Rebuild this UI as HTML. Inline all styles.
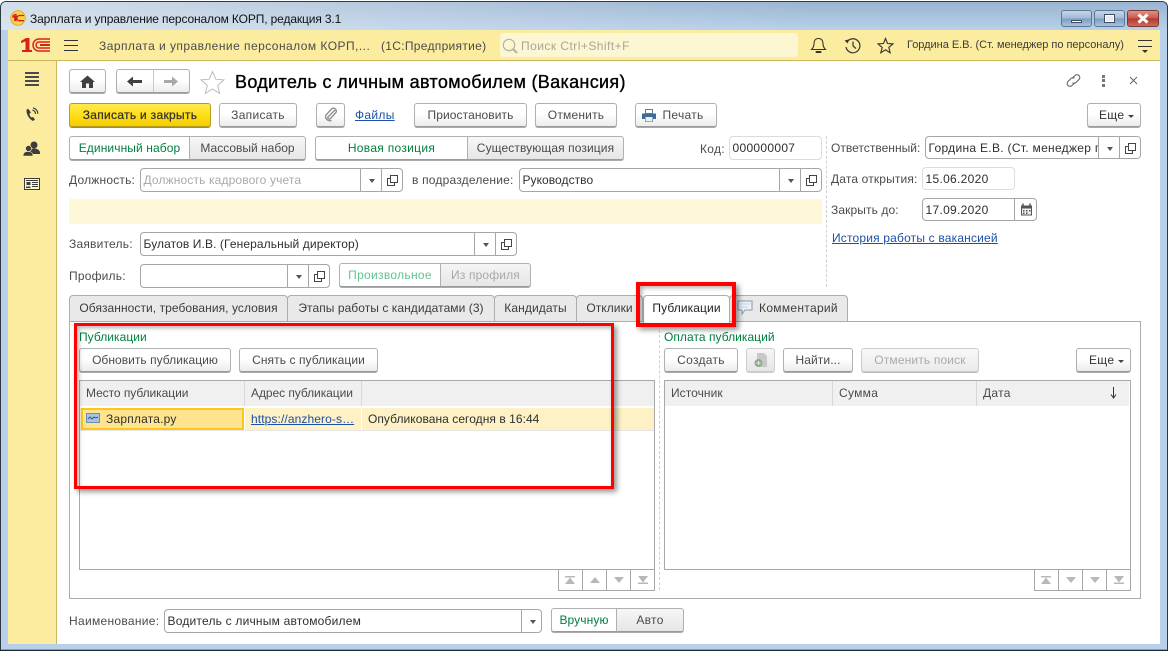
<!DOCTYPE html>
<html lang="ru"><head><meta charset="utf-8"><title>Зарплата и управление персоналом КОРП</title>
<style>
*{box-sizing:border-box}
html,body{margin:0;padding:0;width:1168px;height:652px;overflow:hidden;background:#fff}
body{position:relative;font:12px/16px "Liberation Sans",Arial,sans-serif;color:#4b4b4b;letter-spacing:.2px}
div,span,a,svg{position:absolute;display:block}
.t{white-space:nowrap;line-height:16px}
.v{color:#2f2f2f}
.g{color:#00803c}
.l{color:#1c50a8;text-decoration:underline}
.b{border:1px solid #b0b0b0;border-bottom-color:#9a9a9a;border-radius:3px;background:linear-gradient(#fff,#fff 45%,#ececec);box-shadow:0 1px 0 #aaa;height:24px;text-align:center;line-height:23px;white-space:nowrap;color:#4b4b4b;letter-spacing:.08px}
.on{background:#fff;color:#00803c}
.f{border:1px solid #a6a6a6;border-radius:4px;background:#fff;height:24px;line-height:23px;white-space:nowrap;padding-left:2.5px;color:#2f2f2f;overflow:hidden;letter-spacing:.1px}
.lt{border-color:#dcdcdc;letter-spacing:.3px}
.dd{top:0;bottom:0;width:22px;border-left:1px solid #a6a6a6}
.dd:after{content:"";position:absolute;left:8px;top:10px;border:3px solid transparent;border-top:4px solid #555;border-bottom:0}
.cp{top:0;bottom:0;right:0;width:21px;border-left:1px solid #a6a6a6}
.cp svg{left:5px;top:6px}
.tab{top:295px;height:27px;background:#e9e9e9;border:1px solid #adadad;border-radius:4px 4px 0 0;text-align:center;line-height:24px;white-space:nowrap;color:#3c3c3c;letter-spacing:.06px}
.th{top:381px;height:25px;background:#f0f0f0;border-right:1px solid #d8d8d8;line-height:24px;padding-left:6px;color:#4b4b4b;white-space:nowrap;letter-spacing:-.06px}
.pg{top:569px;height:22px;width:25px;border:1px solid #a8a8a8;background:#fff}
.rb{border-style:solid;border-color:#f00;box-shadow:3px 3px 5px rgba(0,0,0,.4),inset 2px 2px 4px rgba(0,0,0,.3)}
</style></head><body>

<!-- window frame -->
<div style="left:0;top:0;width:1168px;height:652px;background:#fff"></div>
<div style="left:0;top:1px;width:1168px;height:650px;border:1px solid #2d3a44;border-bottom:2px solid #1b2a33;border-radius:6px 6px 0 0;background:#b8d0ea"></div>
<div style="left:1px;top:2px;width:1166px;height:28px;border-radius:5px 5px 0 0;background:linear-gradient(90deg,rgba(230,235,240,.75),rgba(225,232,240,.35) 35%,rgba(255,255,255,0) 70%),linear-gradient(#9ab4d1,#b8d0ea)"></div>
<div style="left:1px;top:649px;width:1166px;height:1px;background:#29c5e0"></div>

<!-- title -->
<svg style="left:10px;top:10px" width="16" height="16" viewBox="0 0 16 16"><circle cx="8" cy="8" r="7.3" fill="#fbd24a" stroke="#d9a520" stroke-width=".8"/><path d="M3 6l2-1.500h1v6H4.800V6.500L3 7zM14 5.500H9.500a2.600 2.600 0 0 0 0 5.200H14" fill="none" stroke="#d2201a" stroke-width="1.300"/></svg>
<span class="t" style="left:30px;top:11px;color:#111;letter-spacing:-.13px">Зарплата и управление персоналом КОРП, редакция 3.1</span>

<!-- window buttons -->
<div style="left:1061px;top:10px;width:31px;height:17px;border:1px solid #5b7896;border-radius:3px;background:linear-gradient(#c6d6e8,#a2bad6 48%,#7d9cc0 52%,#a9c2de)"></div>
<div style="left:1071px;top:20px;width:11px;height:3px;background:#fff;border:1px solid #3e4f62"></div>
<div style="left:1094px;top:10px;width:31px;height:17px;border:1px solid #5b7896;border-radius:3px;background:linear-gradient(#c6d6e8,#a2bad6 48%,#7d9cc0 52%,#a9c2de)"></div>
<div style="left:1104px;top:14px;width:11px;height:9px;background:#e4ebf2;border:1px solid #3e4f62;box-shadow:inset 0 0 0 1px #fff"></div>
<div style="left:1127px;top:10px;width:32px;height:17px;border:1px solid #7a3a33;border-radius:3px;background:linear-gradient(#dd9488,#c9584b 48%,#b33a2c 52%,#cf6a58)"></div>
<svg style="left:1136px;top:13px" width="14" height="11" viewBox="0 0 14 11"><path d="M2.500 1.500L11.500 9.500M11.500 1.500L2.500 9.500" stroke="#fff" stroke-width="3"/></svg>

<!-- top yellow bar -->
<div style="left:8px;top:30px;width:1152px;height:31px;background:#fbec9f;border-bottom:1px solid #c9b95c"></div>
<svg style="left:20px;top:36px" width="32" height="18" viewBox="0 0 32 18"><path d="M1 5l5-3h3.500v12H12v2H2v-2h3.500V5.500L1 7z" fill="#d8231c"/><path d="M30 3H19a6 6 0 0 0 0 12h11M30 6H19a3 3 0 0 0 0 6h11" fill="none" stroke="#d8231c" stroke-width="1.500"/><rect x="20" y="8" width="10" height="2" fill="#d8231c"/></svg>
<div style="left:64px;top:40px;width:14px;height:1px;background:#333"></div>
<div style="left:64px;top:45px;width:14px;height:1px;background:#333"></div>
<div style="left:64px;top:50px;width:14px;height:1px;background:#333"></div>
<span class="t" style="left:99px;top:38px;letter-spacing:.46px">Зарплата и управление персоналом КОРП,...</span>
<span class="t" style="left:381px;top:38px;letter-spacing:.3px">(1С:Предприятие)</span>
<div style="left:500px;top:33px;width:298px;height:24px;background:#fdf6d3;border-radius:3px"></div>
<svg style="left:501px;top:37px" width="18" height="18" viewBox="0 0 18 18"><circle cx="8" cy="8" r="5.700" fill="none" stroke="#b4b2a4" stroke-width="1.200"/><path d="M12 12l4 4" stroke="#b4b2a4" stroke-width="2"/></svg>
<span class="t" style="left:521px;top:38px;color:#a8a698;letter-spacing:.46px">Поиск Ctrl+Shift+F</span>
<svg style="left:810px;top:37px" width="17" height="18" viewBox="0 0 17 18"><path d="M8.500 1.500c-3 0-4.500 2-4.500 5 0 3-1 4.500-2.500 6h14c-1.500-1.500-2.500-3-2.500-6 0-3-1.500-5-4.500-5z" fill="none" stroke="#333" stroke-width="1.100"/><rect x="5.500" y="14" width="6" height="2" rx="1" fill="#333"/></svg>
<svg style="left:844px;top:37px" width="17" height="17" viewBox="0 0 17 17"><path d="M2.700 5.500A7 7 0 1 1 2 10" fill="none" stroke="#333" stroke-width="1.200"/><path d="M.5 3.500L4.500 2.500 4 6.500z" fill="#333"/><path d="M9 4.500v4.500l3 2.500" fill="none" stroke="#333" stroke-width="1.200"/></svg>
<svg style="left:877px;top:37px" width="17" height="17" viewBox="0 0 17 17"><path d="M8.500 1.500l2 5 5.500.4-4.200 3.500 1.400 5.400-4.700-3-4.700 3 1.400-5.400L1 6.900l5.500-.4z" fill="none" stroke="#333" stroke-width="1.100"/></svg>
<span class="t" style="left:907px;top:37px;font-size:11px;color:#3c3c3c;letter-spacing:-.025px">Гордина Е.В. (Ст. менеджер по персоналу)</span>
<div style="left:1138px;top:40px;width:14px;height:1px;background:#333"></div>
<div style="left:1138px;top:46px;width:14px;height:1px;background:#333"></div>
<div style="left:1142px;top:50px;border:3px solid transparent;border-top:3px solid #333;border-bottom:0"></div>

<!-- sidebar -->
<div style="left:8px;top:61px;width:49px;height:583px;background:#fbec9f;border-right:1px solid #c9b95c"></div>
<div style="left:25px;top:72px;width:14px;height:2px;background:#4a4a4a"></div>
<div style="left:25px;top:76px;width:14px;height:2px;background:#4a4a4a"></div>
<div style="left:25px;top:80px;width:14px;height:2px;background:#4a4a4a"></div>
<div style="left:25px;top:84px;width:14px;height:2px;background:#4a4a4a"></div>
<svg style="left:25px;top:107px" width="14" height="15" viewBox="0 0 14 15"><path d="M3 1.500L1.500 3c-.5 4 3 9.500 6.500 11l2-1.500-2-2.500-1.500.5C5 9.500 4.500 8 4.500 6.500L6 5.500z" fill="#3d3d3d"/><path d="M7.500 3a4 4 0 0 1 3 4M8 .8a6 6 0 0 1 4.800 6" fill="none" stroke="#3d3d3d" stroke-width="1.200"/></svg>
<svg style="left:23px;top:141px" width="18" height="16" viewBox="0 0 18 16"><circle cx="11" cy="4" r="3.500" fill="#3d3d3d"/><path d="M6 12c0-3 2-4.500 5-4.500s6 1.500 6 4.500v1H6z" fill="#3d3d3d"/><circle cx="5.500" cy="7.500" r="3" fill="#3d3d3d" stroke="#fbec9f" stroke-width=".6"/><path d="M0 15c0-3 2-4.500 5-4.500S10 12 10 15z" fill="#3d3d3d" stroke="#fbec9f" stroke-width=".6"/></svg>
<svg style="left:24px;top:177px" width="16" height="14" viewBox="0 0 16 14"><rect x=".5" y="1.500" width="15" height="11" fill="#fdf6cf" stroke="#3d3d3d"/><rect x="2" y="3" width="12" height="1" fill="#3d3d3d"/><rect x="2.500" y="5" width="4" height="3" fill="#3d3d3d"/><path d="M2 9.500h4.500v1.500H2z" fill="#3d3d3d"/><path d="M8 5.500h6M8 7.500h6M8 9.500h6" stroke="#3d3d3d"/></svg>

<!-- right side white -->
<div style="left:57px;top:61px;width:1103px;height:583px;background:#fff"></div>

<!-- form header -->
<div class="b" style="left:69px;top:69px;width:37px"></div>
<svg style="left:80px;top:75px" width="15" height="13" viewBox="0 0 15 13"><path d="M7.500 .5L15 7h-2v6H9V8.500H6V13H2V7H0z" fill="#404040"/></svg>
<div class="b" style="left:116px;top:69px;width:74px"></div>
<div style="left:153px;top:70px;width:1px;height:22px;background:#c8c8c8"></div>
<svg style="left:127px;top:76px" width="16" height="11" viewBox="0 0 16 11"><path d="M0 5.500L6 .5v3.500h9v3H6v3.500z" fill="#404040"/></svg>
<svg style="left:163px;top:76px" width="16" height="11" viewBox="0 0 16 11"><path d="M15 5.500L9 .5v3.500H1v3h8v3.500z" fill="#a9a9a9"/></svg>
<svg style="left:200px;top:70px" width="25" height="24" viewBox="0 0 25 24"><path d="M12.500 1.500l3.300 7.700 8.200.7-6.300 5.400 2 8.100-7.200-4.400-7.200 4.400 2-8.100L1 9.900l8.200-.7z" fill="#fff" stroke="#b9bcc2"/></svg>
<span class="t" style="left:235px;top:71px;font-size:18px;line-height:22px;color:#000;letter-spacing:.33px;-webkit-text-stroke:.35px #000">Водитель с личным автомобилем (Вакансия)</span>
<svg style="left:1065px;top:72px" width="17" height="17" viewBox="0 0 17 17"><path d="M7 6.500l3-3a2.800 2.800 0 0 1 4 4l-3 3a2.800 2.800 0 0 1-3.500.3M10 10.500l-3 3a2.800 2.800 0 0 1-4-4l3-3a2.800 2.800 0 0 1 3.500-.3" fill="none" stroke="#666" stroke-width="1.100"/></svg>
<div style="left:1102px;top:75px;width:3px;height:3px;background:#777"></div>
<div style="left:1102px;top:79px;width:3px;height:3px;background:#777"></div>
<div style="left:1102px;top:84px;width:3px;height:3px;background:#777"></div>
<svg style="left:1129px;top:76px" width="9" height="9" viewBox="0 0 9 9"><path d="M1 1l7 7M8 1L1 8" stroke="#666"/></svg>

<!-- command bar -->
<div class="b" style="left:69px;top:103px;width:142px;background:linear-gradient(#ffea4d,#ffdf1a 50%,#f5cd00);border-color:#b59e1e;box-shadow:0 1px 0 #a58f1a;color:#333;-webkit-text-stroke:.25px #333;letter-spacing:.3px">Записать и закрыть</div>
<div class="b" style="left:219px;top:103px;width:78px;letter-spacing:.3px">Записать</div>
<div class="b" style="left:316px;top:103px;width:29px"></div>
<svg style="left:324px;top:107px" width="14" height="15" viewBox="0 0 14 15"><path d="M11 3L4 10a1.500 1.500 0 0 0 2 2l6-6.500a3 3 0 0 0-4-4L2 8a4.200 4.200 0 0 0 5.500 5.500" fill="none" stroke="#8a8a8a" stroke-width="1.300"/></svg>
<a class="t l" style="left:355px;top:107px;letter-spacing:.3px">Файлы</a>
<div class="b" style="left:414px;top:103px;width:113px">Приостановить</div>
<div class="b" style="left:535px;top:103px;width:82px;letter-spacing:.2px">Отменить</div>
<div class="b" style="left:635px;top:103px;width:82px;padding-left:14px;letter-spacing:.3px">Печать</div>
<svg style="left:642px;top:109px" width="14" height="13" viewBox="0 0 14 13"><rect x="3.500" y=".5" width="7" height="4" fill="#fff" stroke="#5d7f9f"/><path d="M0 4.500h14V10h-3v3H3v-3H0z" fill="#3e6c96"/><rect x="3.500" y="8" width="7" height="4.500" fill="#e8eef3"/></svg>
<div class="b" style="left:1087px;top:103px;width:54px;text-align:left;padding-left:11px;color:#333;letter-spacing:.3px">Еще</div>
<div style="left:1128px;top:115px;border:3px solid transparent;border-top:3px solid #444;border-bottom:0"></div>

<!-- row toggles -->
<div class="b on" style="left:69px;top:136px;width:121px;border-radius:3px 0 0 3px;letter-spacing:.1px">Единичный набор</div>
<div class="b" style="left:189px;top:136px;width:117px;border-radius:0 3px 3px 0;background:linear-gradient(#f7f7f7,#e6e6e6);letter-spacing:0">Массовый набор</div>
<div class="b on" style="left:315px;top:136px;width:153px;border-radius:3px 0 0 3px;letter-spacing:.3px">Новая позиция</div>
<div class="b" style="left:467px;top:136px;width:157px;border-radius:0 3px 3px 0;background:linear-gradient(#f7f7f7,#e6e6e6);letter-spacing:.1px">Существующая позиция</div>
<span class="t" style="left:700px;top:141px;letter-spacing:.3px">Код:</span>
<div class="f lt" style="left:729px;top:136px;width:93px">000000007</div>

<!-- right column -->
<div style="left:826px;top:136px;width:0;height:151px;border-left:1px dashed #d0d0d0"></div>
<span class="t" style="left:831px;top:140px;letter-spacing:.02px">Ответственный:</span>
<div class="f" style="left:925px;top:136px;width:216px;height:23px;letter-spacing:.3px;line-height:22px">Гордина Е.В. (Ст. менеджер п<div class="dd" style="left:172px;background:#fff"></div><div class="cp" style="background:#fff"><svg width="11" height="11" viewBox="0 0 11 11"><path d="M3.500 .5h7v7h-7zM3.500 3.500H.5v7h7V7.500" fill="none" stroke="#444"/></svg></div></div>
<span class="t" style="left:831px;top:171px;letter-spacing:.15px">Дата открытия:</span>
<div class="f lt" style="left:922px;top:167px;width:93px;height:23px;line-height:22px">15.06.2020</div>
<span class="t" style="left:831px;top:202px;letter-spacing:.1px">Закрыть до:</span>
<div class="f" style="left:922px;top:198px;width:115px;height:23px;line-height:22px;letter-spacing:.3px">17.09.2020<div style="left:91px;top:0;bottom:0;width:1px;background:#a6a6a6"></div>
<svg style="left:97px;top:4px" width="13" height="13" viewBox="0 0 13 13"><path d="M1 2.500h11v10H1z" fill="#555"/><rect x="2" y="5.500" width="9" height="6" fill="#eee"/><path d="M3 .5v3M10 .5v3" stroke="#555" stroke-width="1.500"/><path d="M3 7h1.500v1.500H3zM6 7h1.500v1.500H6zM9 7h1.500v1.500H9zM3 9.500h1.500V11H3zM6 9.500h1.500V11H6z" fill="#555"/></svg></div>
<a class="t l" style="left:832px;top:230px;letter-spacing:.18px">История работы с вакансией</a>

<!-- fields -->
<span class="t" style="left:69px;top:172px">Должность:</span>
<div class="f" style="left:140px;top:168px;width:263px;color:#a9a9a9;letter-spacing:.14px">Должность кадрового учета<div class="dd" style="left:219px"></div><div class="cp"><svg width="11" height="11" viewBox="0 0 11 11"><path d="M3.500 .5h7v7h-7zM3.500 3.500H.5v7h7V7.500" fill="none" stroke="#444"/></svg></div></div>
<span class="t" style="left:412px;top:172px">в подразделение:</span>
<div class="f" style="left:519px;top:168px;width:303px;letter-spacing:.05px">Руководство<div class="dd" style="left:259px"></div><div class="cp"><svg width="11" height="11" viewBox="0 0 11 11"><path d="M3.500 .5h7v7h-7zM3.500 3.500H.5v7h7V7.500" fill="none" stroke="#444"/></svg></div></div>
<div style="left:69px;top:199px;width:753px;height:25px;background:#fdf8d8"></div>
<span class="t" style="left:69px;top:236px">Заявитель:</span>
<div class="f" style="left:140px;top:232px;width:377px">Булатов И.В. (Генеральный директор)<div class="dd" style="left:333px"></div><div class="cp"><svg width="11" height="11" viewBox="0 0 11 11"><path d="M3.500 .5h7v7h-7zM3.500 3.500H.5v7h7V7.500" fill="none" stroke="#444"/></svg></div></div>
<span class="t" style="left:69px;top:268px">Профиль:</span>
<div class="f" style="left:140px;top:264px;width:190px"><div class="dd" style="left:146px"></div><div class="cp"><svg width="11" height="11" viewBox="0 0 11 11"><path d="M3.500 .5h7v7h-7zM3.500 3.500H.5v7h7V7.500" fill="none" stroke="#444"/></svg></div></div>
<div class="b" style="left:339px;top:263px;width:102px;border-radius:3px 0 0 3px;background:#fff;color:#5fc58d;letter-spacing:.3px">Произвольное</div>
<div class="b" style="left:440px;top:263px;width:91px;border-radius:0 3px 3px 0;background:linear-gradient(#f5f5f5,#e6e6e6);color:#a8a8a8;letter-spacing:.15px">Из профиля</div>

<!-- tab panel -->
<div style="left:69px;top:321px;width:1072px;height:278px;border:1px solid #adadad;background:#fff"></div>
<div class="tab" style="left:69px;width:219px">Обязанности, требования, условия</div>
<div class="tab" style="left:287px;width:208px">Этапы работы с кандидатами (3)</div>
<div class="tab" style="left:494px;width:83px;letter-spacing:.1px">Кандидаты</div>
<div class="tab" style="left:576px;width:67px">Отклики</div>
<div class="tab" style="left:729px;width:119px;padding-left:20px;letter-spacing:.3px">Комментарий</div>
<svg style="left:737px;top:300px" width="16" height="15" viewBox="0 0 16 15"><path d="M1 1h14v9H8l-3 4v-4H1z" fill="#eef3f8" stroke="#7f9cb8"/><path d="M3 4h10M3 7h8" stroke="#c3d2e0"/></svg>
<div class="tab" style="left:643px;width:87px;height:28px;background:#fff;color:#222;border-bottom:0;letter-spacing:.1px">Публикации</div>

<!-- left group -->
<span class="t g" style="left:79px;top:329px;letter-spacing:.05px">Публикации</span>
<div class="b" style="left:79px;top:348px;width:152px;letter-spacing:.04px">Обновить публикацию</div>
<div class="b" style="left:239px;top:348px;width:139px">Снять с публикации</div>
<div style="left:79px;top:380px;width:576px;height:190px;border:1px solid #a8a8a8"></div>
<div class="th" style="left:80px;width:165px">Место публикации</div>
<div class="th" style="left:245px;width:117px">Адрес публикации</div>
<div class="th" style="left:362px;width:292px;border:0"></div>
<div style="left:80px;top:408px;width:574px;height:22px;background:#fdf1c5"></div>
<div style="left:80px;top:430px;width:574px;height:1px;background:#e6e6e6"></div>
<div style="left:81px;top:408px;width:163px;height:22px;background:#ffe48f;border:2px solid #fcc520"></div>
<div style="left:244px;top:408px;width:1px;height:22px;background:#fff"></div>
<div style="left:361px;top:408px;width:1px;height:22px;background:#fff"></div>
<svg style="left:86px;top:413px" width="14" height="10" viewBox="0 0 14 10"><rect x=".5" y=".5" width="13" height="9" fill="#a9c4de" stroke="#6f8fae"/><path d="M2 6l2-2 2 2 2-2 2 1 2-1" fill="none" stroke="#2f5f92"/></svg>
<span class="t v" style="left:106px;top:411px">Зарплата.ру</span>
<a class="t l" style="left:251px;top:411px;letter-spacing:.1px">https://anzhero-s…</a>
<span class="t v" style="left:368px;top:411px;letter-spacing:.05px">Опубликована сегодня в 16:44</span>

<div class="pg" style="left:558px"></div><div class="pg" style="left:582px"></div><div class="pg" style="left:606px"></div><div class="pg" style="left:630px"></div>
<svg style="left:565px;top:576px" width="10" height="8" viewBox="0 0 10 8"><path d="M0 0h10v1.500H0zM5 1.500L10 8H0z" fill="#b8b8b8"/></svg>
<svg style="left:590px;top:577px" width="10" height="6" viewBox="0 0 10 6"><path d="M5 0l5 6H0z" fill="#b8b8b8"/></svg>
<svg style="left:614px;top:577px" width="10" height="6" viewBox="0 0 10 6"><path d="M5 6l5-6H0z" fill="#b8b8b8"/></svg>
<svg style="left:638px;top:576px" width="10" height="8" viewBox="0 0 10 8"><path d="M0 8h10V6.500H0zM5 6.500L10 0H0z" fill="#b8b8b8"/></svg>

<!-- right group -->
<div style="left:659px;top:330px;width:0;height:260px;border-left:1px dashed #d0d0d0"></div>
<span class="t g" style="left:664px;top:329px;letter-spacing:.05px">Оплата публикаций</span>
<div class="b" style="left:664px;top:348px;width:74px;letter-spacing:.3px">Создать</div>
<div class="b" style="left:746px;top:348px;width:29px;background:linear-gradient(#f6f6f6,#e6e6e6);border-color:#ccc;box-shadow:0 1px 0 #ccc"></div>
<svg style="left:753px;top:352px" width="16" height="16" viewBox="0 0 16 16"><path d="M4 1h7l3 3v11H4z" fill="#c8c8c8"/><circle cx="5.500" cy="11" r="4" fill="#93ac93"/><path d="M3.500 11h4M5.500 9v4" stroke="#e4ece4"/></svg>
<div class="b" style="left:783px;top:348px;width:70px;letter-spacing:.1px">Найти...</div>
<div class="b" style="left:861px;top:348px;width:118px;background:linear-gradient(#f9f9f9,#eaeaea);color:#aaa;border-color:#ccc;box-shadow:0 1px 0 #bbb;letter-spacing:.15px">Отменить поиск</div>
<div class="b" style="left:1076px;top:348px;width:55px;text-align:left;padding-left:12px;color:#333;letter-spacing:.3px">Еще</div>
<div style="left:1118px;top:360px;border:3px solid transparent;border-top:3px solid #444;border-bottom:0"></div>
<div style="left:664px;top:380px;width:467px;height:190px;border:1px solid #a8a8a8"></div>
<div class="th" style="left:665px;width:168px;letter-spacing:.05px">Источник</div>
<div class="th" style="left:833px;width:144px;letter-spacing:.3px">Сумма</div>
<div class="th" style="left:977px;width:152px;border:0;letter-spacing:.3px">Дата</div>
<svg style="left:1110px;top:387px" width="7" height="12" viewBox="0 0 7 12"><path d="M3.500 0v10M1 7.500l2.500 3.500L6 7.500" fill="none" stroke="#333"/></svg>

<div class="pg" style="left:1034px"></div><div class="pg" style="left:1058px"></div><div class="pg" style="left:1082px"></div><div class="pg" style="left:1106px"></div>
<svg style="left:1041px;top:576px" width="10" height="8" viewBox="0 0 10 8"><path d="M0 0h10v1.500H0zM5 1.500L10 8H0z" fill="#b8b8b8"/></svg>
<svg style="left:1066px;top:577px" width="10" height="6" viewBox="0 0 10 6"><path d="M5 6l5-6H0z" fill="#b8b8b8"/></svg>
<svg style="left:1090px;top:577px" width="10" height="6" viewBox="0 0 10 6"><path d="M5 6l5-6H0z" fill="#b8b8b8"/></svg>
<svg style="left:1114px;top:576px" width="10" height="8" viewBox="0 0 10 8"><path d="M0 8h10V6.500H0zM5 6.500L10 0H0z" fill="#b8b8b8"/></svg>

<!-- bottom -->
<span class="t" style="left:69px;top:613px;letter-spacing:.3px">Наименование:</span>
<div class="f" style="left:164px;top:609px;width:378px;letter-spacing:.2px">Водитель с личным автомобилем<div class="dd" style="left:356px"></div></div>
<div class="b on" style="left:551px;top:608px;width:66px;border-radius:3px 0 0 3px;letter-spacing:.1px">Вручную</div>
<div class="b" style="left:616px;top:608px;width:68px;border-radius:0 3px 3px 0;background:linear-gradient(#f7f7f7,#e6e6e6);letter-spacing:.3px">Авто</div>

<!-- annotations -->
<div class="rb" style="left:74px;top:323px;width:540px;height:166px;border-width:3px;background:transparent"></div>
<div class="rb" style="left:636px;top:282px;width:100px;height:45px;border-width:4px;background:transparent"></div>
</body></html>
